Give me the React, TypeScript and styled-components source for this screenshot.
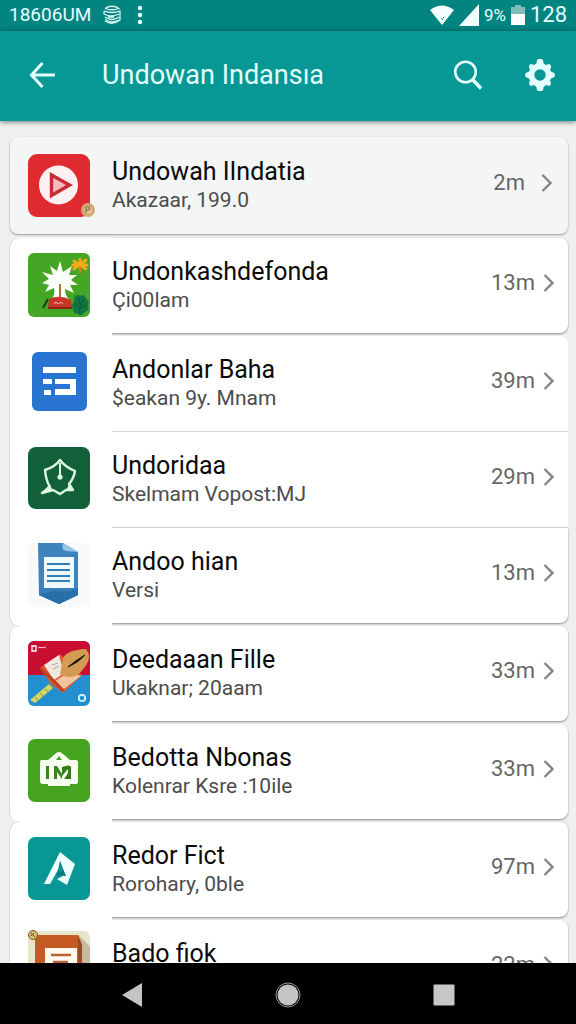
import React from "react";
import styled, { createGlobalStyle, css } from "styled-components";

const GlobalStyle = createGlobalStyle`
  * { box-sizing: border-box; }
  body { margin: 0; background: #eeefef; font-family: Roboto, "Liberation Sans", sans-serif; }
`;

const Screen = styled.div`
  display: flex;
  flex-direction: column;
  height: 100vh;
  overflow: hidden;
`;

const StatusBar = styled.div`
  display: flex;
  align-items: center;
  justify-content: space-between;
  height: 31px;
  flex: none;
  padding: 0 9px 2px 9px;
  background: #028480;
  color: #e4fffd;
`;

const StatusGroup = styled.div<{ $gap: number }>`
  display: flex;
  align-items: center;
  gap: ${(p) => p.$gap}px;
`;

const StatusText = styled.span<{ $size: number }>`
  font-size: ${(p) => p.$size}px;
  line-height: 28px;
  white-space: nowrap;
`;

const AppBar = styled.header`
  display: flex;
  align-items: center;
  height: 90px;
  flex: none;
  padding: 0 16px 2px 22px;
  background: #079896;
  color: #e4fffd;
  box-shadow: 0 1px 5px rgba(0, 0, 0, 0.5);
  z-index: 2;
`;

const Heading = styled.h1`
  flex: 1;
  margin: 0 0 0 40px;
  font-size: 27px;
  line-height: 32px;
  font-weight: 400;
  white-space: nowrap;
`;

const IconButton = styled.button`
  display: flex;
  align-items: center;
  justify-content: center;
  width: 40px;
  height: 48px;
  padding: 0;
  border: 0;
  background: none;
  color: inherit;
`;

const Actions = styled.div`
  display: flex;
  gap: 32px;
`;

const Content = styled.main`
  flex: 1;
  min-height: 0;
  overflow: hidden;
  padding: 16px 8px 0 10px;
`;

const List = styled.ul`
  list-style: none;
  margin: 0;
  padding: 0;
`;

type Edge = "card" | "line";

const RowLink = styled.a`
  display: flex;
  color: #0b0b0b;
  text-decoration: none;
`;

const ThumbCell = styled.span<{ $first?: boolean; $last?: boolean }>`
  position: relative;
  z-index: 1;
  display: flex;
  flex: none;
  width: 102px;
  padding: 15px 0 0 18px;
  background: #fff;
  border-radius: ${(p) => (p.$first ? 10 : 0)}px 0 0 ${(p) => (p.$last ? 10 : 0)}px;
  box-shadow: -1px 0 0 #dcdcdc;
`;

const Body = styled.span<{ $top: Edge; $bottom: Edge }>`
  display: flex;
  align-items: center;
  flex: 1;
  min-width: 0;
  height: 95px;
  padding-right: 14px;
  background: #fff;
  border-radius: 0 ${(p) => (p.$top === "card" ? 8 : 0)}px ${(p) => (p.$bottom === "card" ? 8 : 0)}px 0;
  ${(p) =>
    p.$bottom === "card"
      ? css`
          margin-bottom: 3px;
          box-shadow: 0 1px 2px rgba(0, 0, 0, 0.42);
        `
      : css`
          margin-bottom: 1px;
          box-shadow: 0 1px 0 #d3d6d7;
        `}
`;

const Featured = styled(RowLink)`
  height: 97px;
  margin-bottom: 4px;
  border-radius: 8px;
  background: #f4f5f5;
  box-shadow: 0 1px 2px rgba(0, 0, 0, 0.36);

  & > ${ThumbCell}, & > ${Body} {
    height: 97px;
    margin: 0;
    background: none;
    box-shadow: none;
  }
  & > ${Body} { padding-right: 16px; }
  & > ${ThumbCell} { padding-top: 17px; }
`;

const Texts = styled.span`
  display: flex;
  flex-direction: column;
  flex: 1;
  min-width: 0;
`;

const Title = styled.span`
  font-size: 25px;
  line-height: 29px;
  white-space: nowrap;
`;

const Subtitle = styled.span`
  font-size: 21px;
  line-height: 29px;
  color: #4c4c4c;
  white-space: nowrap;
`;

const Meta = styled.span<{ $gap: number }>`
  display: flex;
  align-items: center;
  gap: ${(p) => p.$gap}px;
  padding-bottom: 5px;
  font-size: 22px;
  line-height: 28px;
  color: #666;
`;

const NavBar = styled.nav`
  display: flex;
  align-items: center;
  justify-content: space-between;
  height: 61px;
  flex: none;
  padding: 2px 112px 0 112px;
  background: #000;
  z-index: 2;
`;

const Chevron = () => (
  <svg width="11" height="18" viewBox="0 0 11 18" fill="none" stroke="#858585" strokeWidth="2.4">
    <path d="M1.5 1 L9.5 9 L1.5 17" />
  </svg>
);

const Thumb = ({ children }: { children: React.ReactNode }) => (
  <svg width="62" height="64" viewBox="0 0 62 64" aria-hidden="true" overflow="visible">
    {children}
  </svg>
);

const PlayArt = () => (
  <Thumb>
    <rect width="62" height="63" rx="9" fill="#df2a30" />
    <circle cx="30.500" cy="31" r="19.500" fill="#fff1f1" />
    <path d="M23.500 21 L41.500 31 L23.500 41.500 Z" fill="#f8b9bd" stroke="#c92a33" strokeWidth="3.400" />
    <circle cx="60" cy="56" r="7" fill="#d5ad78" />
    <circle cx="60" cy="56" r="5" fill="#e2c193" stroke="#c09a68" />
    <path d="M58 59 V53 H61 Q63 55 60 56 H58" fill="none" stroke="#8a6a40" strokeWidth="1.200" />
  </Thumb>
);

const PalmArt = () => (
  <Thumb>
    <rect width="62" height="64" rx="6" fill="#45a524" />
    <path d="M32 8 L35 19 L44 13 L41 22 L49 22 L43 27 L50 32 L42 32 L46 40 L37 36 Q37 44 43 48 L22 48 Q28 42 26 35 L17 39 L21 32 L14 30 L21 26 L14 19 L25 22 L22 13 L29 18 Z" fill="#fcfff8" />
    <path d="M32 31 V48" stroke="#a97833" strokeWidth="2" />
    <path d="M21 46 Q32 41 43 47 L44 56 H20 Z" fill="#c73528" />
    <path d="M20 46 L15 55" stroke="#193c18" strokeWidth="2" />
    <path d="M26 51 l2 -2 l2 2 l3 -2 l2 2" stroke="#f5b9a3" fill="none" />
    <path d="M20 55 H44" stroke="#8e2118" strokeWidth="2" />
    <g stroke="#f6aa1b" strokeWidth="3" strokeLinecap="round">
      <path d="M52 6 V13 M46 8 L58 16 M58 7 L46 16 M45 12 H59" />
    </g>
    <path d="M52 13 V20" stroke="#d98a16" strokeWidth="2" />
    <path d="M46 45 Q49 40 52 43 Q57 40 58 46 Q62 48 60 52 Q62 57 57 59 Q54 64 50 61 Q45 61 45 56 Q42 52 46 50 Z" fill="#147544" />
    <path d="M52 62 Q50 52 57 45 M51 54 L46 50 M51 56 L58 52 M52 51 L51 45" fill="none" stroke="#075c34" />
  </Thumb>
);

const DocumentArt = () => (
  <Thumb>
    <rect x="4" y="1" width="55" height="59" rx="6" fill="#2874d0" />
    <path d="M15 16 H48 V22 H15 Z M15 28 H24 V33 H15 Z M27 28 H48 V44 H27 V38 H42 V33 H27 Z M16 39 H23 V44 H16 Z" fill="#fff" />
  </Thumb>
);

const PenArt = () => (
  <Thumb>
    <rect width="62" height="62" rx="8" fill="#12603a" />
    <path d="M32 13 Q27 20 17 23 Q18 34 22 40 L14 46 L25 43 L32 47 L38 43 L45 43 L41 37 Q46 31 47 24 Q37 20 32 13 Z" fill="none" stroke="#dcf8df" strokeWidth="2.400" strokeLinejoin="round" />
    <path d="M14 46 L21 38 L25 43 Z M45 43 L42 36 L38 43 Z" fill="#dcf8df" />
    <path d="M32 16 V29" stroke="#dcf8df" strokeWidth="2" />
    <circle cx="32" cy="30" r="2.600" fill="#dcf8df" />
  </Thumb>
);

const PageArt = () => (
  <Thumb>
    <rect width="62" height="64" rx="6" fill="#f8f9fa" />
    <path d="M10 0 H35 L50 9 V52 L31 61 L11 52 Z" fill="#3f83bc" />
    <path d="M35 0 L50 9 L38 8 Q33 7 35 0 Z" fill="#97c3e4" />
    <path d="M11 45 L50 45 V52 L31 61 L11 52 Z" fill="#377eb8" />
    <path d="M26 48 Q39 50 50 46 V52 L31 61 L11 52 Z" fill="#276fa9" />
    <rect x="16" y="14" width="30" height="31" fill="#eefaff" />
    <path d="M19 21 H42 M19 27 H42 M19 33 H42 M19 38 H42" stroke="#347db6" strokeWidth="2.200" />
  </Thumb>
);

const BookArt = () => (
  <Thumb>
    <clipPath id="book-clip"><rect width="62" height="65" rx="6" /></clipPath>
    <g clipPath="url(#book-clip)">
      <rect width="62" height="65" fill="#238fd0" />
      <path d="M0 0 H62 V34 H0 Z" fill="#c80e31" />
      <path d="M12 27 L32 13 L54 34 L35 52 L23 43 Z" fill="#dd592f" />
      <path d="M16 24 L31 14 L36 32 L26 39 Z" fill="#eee8df" />
      <path d="M27 40 L41 31 L53 35 L36 48 Z" fill="#f4c4a1" />
      <path d="M32 33 L35 17 Q39 9 58 8 Q65 16 56 27 Q48 39 36 35 Z" fill="#d39b51" />
      <path d="M40 26 Q48 19 57 14 Q50 22 40 26" fill="#191a16" stroke="#191a16" />
      <path d="M24 24 L30 22 M25 28 L31 25" stroke="#aaa" />
      <path d="M12 27 L28 42 L35 50" fill="none" stroke="#ba4225" strokeWidth="3" />
      <path d="M2 59 L21 43 L25 47 L7 62 Z" fill="#d9d45b" />
      <path d="M7 56 L10 59 M12 52 L15 55 M17 48 L20 51" stroke="#69a06a" />
      <circle cx="54" cy="57" r="3.200" fill="none" stroke="#d4f4ff" strokeWidth="1.800" />
      <path d="M4 5 H8 V10 H4 Z" fill="none" stroke="#fff" strokeWidth="1.300" />
      <path d="M10 7 l2 -1 l1 1 l2 -1 l1 1 l2 -1" fill="none" stroke="#f6cbd0" />
    </g>
  </Thumb>
);

const BagArt = () => (
  <Thumb>
    <rect width="62" height="63" rx="7" fill="#46a31e" />
    <path d="M13 21 H20 L27 15 Q31 11 35 15 L42 21 H48 Q50 21 50 23 V43 Q50 45 47 45 H42 V47 H20 V45 H15 Q12 45 12 42 V24 Q12 21 13 21 Z" fill="#f6fff0" />
    <path d="M31 17 L34 21 H28 Z" fill="#46a31e" />
    <path d="M18 27 H21 V40 H18 Z M26 27 H29 L34 35 V40 L29 33 V40 H26 Z" fill="#3b841f" />
    <path d="M34 28 Q42 25 43 28 V40 H36 Q41 34 40 30 L34 37 Z" fill="#347b1c" />
  </Thumb>
);

const KiteArt = () => (
  <Thumb>
    <rect width="62" height="63" rx="7" fill="#079896" />
    <path d="M32 15 L47 27 L39 48 L29 42 L35 39 L31 31 L22 47 H16 Z" fill="#f2ffff" />
    <path d="M32 24 L38 39 L29 38 Z" fill="#087878" />
    <path d="M32 24 L35 33 L31 36 Z" fill="#079896" />
  </Thumb>
);

const FolderArt = () => (
  <Thumb>
    <g transform="translate(0 -4)">
      <rect width="62" height="64" rx="6" fill="#e9e5c8" />
      <path d="M51 4 L62 16 V64 H51 Z" fill="#c4baa2" />
      <path d="M7 4 H50 L54 14 V64 H7 Z" fill="#c55b22" />
      <path d="M50 4 L54 14 V64 H51 Z" fill="#9c481d" />
      <rect x="17" y="17" width="32" height="42" fill="#fff9ef" />
      <path d="M23 24 H43 M25 31 H40 M23 38 H43" stroke="#b96332" strokeWidth="2.400" />
      <circle cx="5" cy="4" r="4.500" fill="#d6bb72" stroke="#765d26" />
      <path d="M3 5 L6 2 M3 2 L7 6" stroke="#634819" />
    </g>
  </Thumb>
);

interface Item {
  title: string;
  subtitle: string;
  time: string;
  art: React.ReactNode;
  top: Edge;
  bottom: Edge;
  first?: boolean;
  last?: boolean;
}

const items: Item[] = [
  { title: "Undonkashdefonda", subtitle: "Çi00lam", time: "13m", art: <PalmArt />, top: "card", bottom: "card", first: true },
  { title: "Andonlar Baha", subtitle: "$eakan 9y. Mnam", time: "39m", art: <DocumentArt />, top: "card", bottom: "line" },
  { title: "Undoridaa", subtitle: "Skelmam Vopost:MJ", time: "29m", art: <PenArt />, top: "line", bottom: "line" },
  { title: "Andoo hian", subtitle: "Versi", time: "13m", art: <PageArt />, top: "line", bottom: "card", last: true },
  { title: "Deedaaan Fille", subtitle: "Ukaknar; 20aam", time: "33m", art: <BookArt />, top: "card", bottom: "card", first: true },
  { title: "Bedotta Nbonas", subtitle: "Kolenrar Ksre :10ile", time: "33m", art: <BagArt />, top: "card", bottom: "card", last: true },
  { title: "Redor Fict", subtitle: "Rorohary, 0ble", time: "97m", art: <KiteArt />, top: "card", bottom: "card", first: true },
  { title: "Bado fiok", subtitle: "\u00a0", time: "22m", art: <FolderArt />, top: "card", bottom: "card" },
];

const RowBody = ({ title, subtitle, time, top, bottom, gap = 8 }: Omit<Item, "art"> & { gap?: number }) => (
  <Body $top={top} $bottom={bottom}>
    <Texts>
      <Title>{title}</Title>
      <Subtitle>{subtitle}</Subtitle>
    </Texts>
    <Meta $gap={gap}>
      {time}
      <Chevron />
    </Meta>
  </Body>
);

export default function App() {
  return (
    <Screen>
      <GlobalStyle />
      <StatusBar>
        <StatusGroup $gap={12}>
          <StatusText $size={19}>18606UM</StatusText>
          <svg width="18" height="20" viewBox="0 0 18 20" fill="none" stroke="#d6f6f3" strokeWidth="1.300">
            <path d="M2 3.500 Q9 -1 16 3.500 Q9 6 2 3.500 M1 6 Q9 9 17 6 V15 Q9 21 2 16 M1 6 V9 Q8 13 16 9 M5 12 H11 M2 12 Q9 17 16 12 M2 14.500 Q9 19 16 15" />
          </svg>
          <svg width="18" height="20" viewBox="0 0 18 20" fill="#e4fffd">
            <circle cx="7" cy="3" r="2.200" /><circle cx="7" cy="10" r="2.200" /><circle cx="7" cy="17" r="2.200" />
          </svg>
        </StatusGroup>
        <StatusGroup $gap={5}>
          <svg width="24" height="20" viewBox="0 0 24 20" fill="#f3ffff">
            <path d="M0 5 Q12 -4 24 5 L12 20 Z" />
            <path d="M11 13 l2 2 M13 12 l1 1" stroke="#028480" />
          </svg>
          <svg width="20" height="22" viewBox="0 0 20 22" fill="#f3ffff"><path d="M20 0 V22 H0 Z" /></svg>
          <StatusText $size={17}>9%</StatusText>
          <svg width="14" height="20" viewBox="0 0 14 20">
            <path d="M4 0 H10 V2 H14 V10 H0 V2 H4 Z" fill="#7dbebb" />
            <path d="M0 9 H14 V20 H0 Z" fill="#fff" />
          </svg>
          <StatusText $size={22}>128</StatusText>
        </StatusGroup>
      </StatusBar>

      <AppBar>
        <IconButton aria-label="Back">
          <svg width="26" height="28" viewBox="0 0 26 28" fill="none" stroke="currentColor" strokeWidth="3">
            <path d="M13.500 2 L2.500 14 L13.500 26 M2.500 14 H26" />
          </svg>
        </IconButton>
        <Heading>Undowan Indansıa</Heading>
        <Actions>
          <IconButton aria-label="Search">
            <svg width="30" height="30" viewBox="0 0 30 30" fill="none" stroke="currentColor" strokeWidth="2.600">
              <circle cx="12.500" cy="12" r="10.300" />
              <path d="M19.500 19.500 L28 28.500" strokeWidth="3.600" />
            </svg>
          </IconButton>
          <IconButton aria-label="Settings">
            <svg width="30" height="32" viewBox="0 0 30 32">
              <path
                d="M13 0 H17 Q18.500 1 18.600 4.500 L21 6 L24 5 Q26.500 6 26 8.500 L25 11 L26.500 13 Q30 13.500 30 16 Q30 18.500 26.500 19 L25 21.500 L26 24 Q26 26.500 24 27 L21 26 L18.600 28 Q18.500 31 17 32 H13 Q11.500 31 11.400 28 L9 26 L6 27 Q4 26.500 4 24 L5 21.500 L3.500 19 Q0 18.500 0 16 Q0 13.500 3.500 13 L5 11 L4 8.500 Q3.500 6 6 5 L9 6 L11.400 4.500 Q11.500 1 13 0 Z M15 10.300 A5.700 5.700 0 1 0 15 21.700 A5.700 5.700 0 1 0 15 10.300 Z"
                fill="currentColor"
                fillRule="evenodd"
              />
            </svg>
          </IconButton>
        </Actions>
      </AppBar>

      <Content>
        <List>
          <li>
            <Featured href="#featured">
              <ThumbCell><PlayArt /></ThumbCell>
              <RowBody title="Undowah IIndatia" subtitle="Akazaar, 199.0" time="2m" top="card" bottom="card" gap={16} />
            </Featured>
          </li>
          {items.map(({ art, ...item }) => (
            <li key={item.title}>
              <RowLink href="#item">
                <ThumbCell $first={item.first} $last={item.last}>{art}</ThumbCell>
                <RowBody {...item} />
              </RowLink>
            </li>
          ))}
        </List>
      </Content>

      <NavBar>
        <IconButton aria-label="Go back">
          <svg width="20" height="24" viewBox="0 0 20 24"><path d="M20 0 V24 L0 12 Z" fill="#c4c4c4" /></svg>
        </IconButton>
        <IconButton aria-label="Home">
          <svg width="26" height="26" viewBox="0 0 26 26">
            <circle cx="13" cy="13" r="12" fill="none" stroke="#999" />
            <circle cx="13" cy="13" r="10.500" fill="#c4c4c4" />
          </svg>
        </IconButton>
        <IconButton aria-label="Recent apps">
          <svg width="22" height="22" viewBox="0 0 22 22"><rect width="21" height="21" x="0.500" y="0.500" rx="1" fill="#c8c6c7" /></svg>
        </IconButton>
      </NavBar>
    </Screen>
  );
}
